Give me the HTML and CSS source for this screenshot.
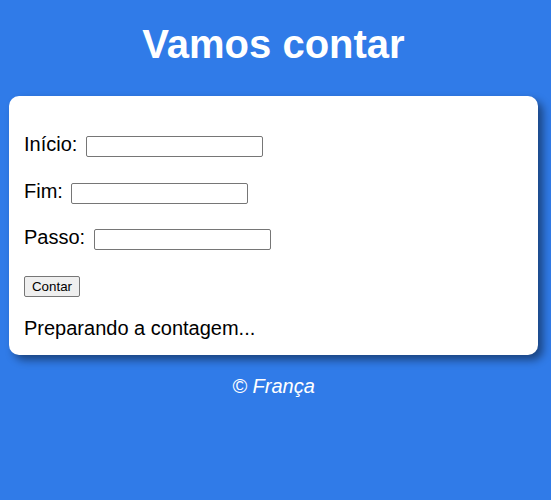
FILE: index.html
```html
<!DOCTYPE html>
<html lang="pt-BR">
<head>
<meta charset="utf-8">
<title>Vamos contar</title>
<link rel="stylesheet" href="styles.css">
</head>
<body>
<header class="top">
  <h1 class="title">Vamos contar</h1>
</header>
<section class="card">
  <p class="row">Início: <input class="field" type="number" id="inicio"></p>
  <p class="row">Fim: <input class="field" type="number" id="fim"></p>
  <p class="row">Passo: <input class="field" type="number" id="passo"></p>
  <p class="row"><input class="btn" type="button" value="Contar"></p>
  <div class="result">Preparando a contagem...</div>
</section>
<footer class="foot">
  <p class="copy">© França</p>
</footer>
</body>
</html>
```
FILE: styles.css
```css
html, body {
  margin: 0;
  padding: 0;
}
body {
  background: #307be8;
  font-family: "Liberation Sans", Arial, sans-serif;
  font-size: 20px;
  color: #000;
}
.top {
  padding: 21px 4px 0 0;
}
.title {
  margin: 0 0 29px;
  font-size: 40px;
  line-height: 46px;
  font-weight: bold;
  color: #fff;
  text-align: center;
}
.card {
  width: 529px;
  box-sizing: border-box;
  margin: 0 0 0 9px;
  padding: 15px 15px 15px;
  background: #fff;
  border-radius: 10px;
  box-shadow: 5px 5px 8px rgba(0, 0, 0, 0.45);
}
.row {
  margin: 0 0 20px;
  line-height: 26.5px;
}
.row:first-child {
  margin-top: 20px;
}
.field {
  box-sizing: border-box;
  width: 177px;
  height: 21px;
  margin: 0 0 0 3px;
  padding: 1px 2px;
  border: 1px solid #767676;
  border-radius: 2px;
  font-family: "Liberation Sans", Arial, sans-serif;
  font-size: 13.33px;
  line-height: normal;
  background: #fff;
  -moz-appearance: textfield;
  appearance: textfield;
}
.field::-webkit-inner-spin-button,
.field::-webkit-outer-spin-button {
  -webkit-appearance: none;
  margin: 0;
}
.btn {
  box-sizing: border-box;
  width: 56px;
  height: 21px;
  margin: 0;
  padding: 1px 6px;
  border: 1px solid #767676;
  border-radius: 2px;
  background: #efefef;
  font-family: "Liberation Sans", Arial, sans-serif;
  font-size: 13.33px;
  line-height: normal;
  color: #000;
}
.result {
  line-height: 23px;
}
.foot {
  text-align: center;
  padding-right: 4px;
}
.copy {
  margin: 20px 0 0;
  color: #fff;
  font-style: italic;
}
```
